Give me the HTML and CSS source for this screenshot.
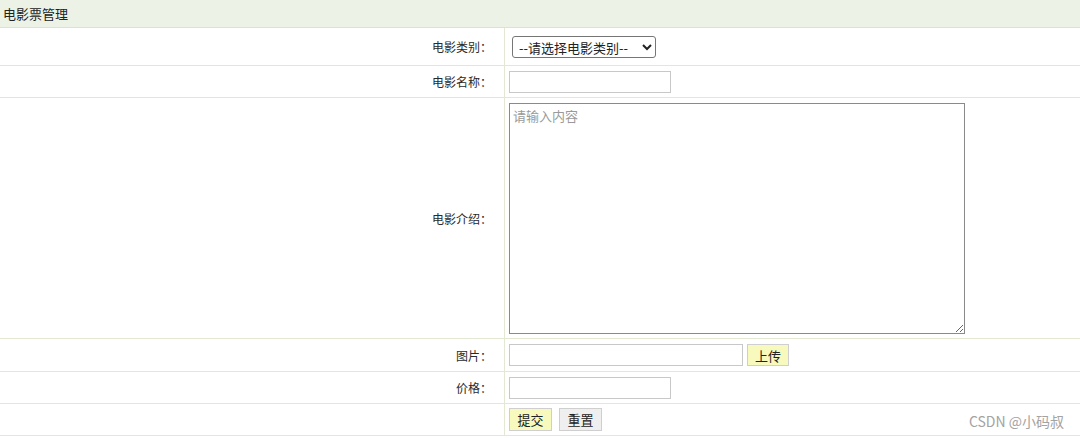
FILE: index.html
```html
<!DOCTYPE html>
<html lang="zh">
<head>
<meta charset="utf-8">
<link rel="stylesheet" href="styles.css">
</head>
<body>
<div class="panel">
  <div class="title">电影票管理</div>
  <form class="form">
    <div class="row r-cat">
      <div class="label">电影类别：</div>
      <div class="field">
        <select class="select"><option>--请选择电影类别--</option></select>
      </div>
    </div>
    <div class="row r-std">
      <div class="label">电影名称：</div>
      <div class="field"><input class="text short" type="text"></div>
    </div>
    <div class="row r-intro">
      <div class="label">电影介绍：</div>
      <div class="field"><textarea class="area" placeholder="请输入内容"></textarea></div>
    </div>
    <div class="row r-img">
      <div class="label">图片：</div>
      <div class="field">
        <input class="text long" type="text">
        <button type="button" class="btn yellow">上传</button>
      </div>
    </div>
    <div class="row r-std">
      <div class="label">价格：</div>
      <div class="field"><input class="text short" type="text"></div>
    </div>
    <div class="row r-btn">
      <div class="label"></div>
      <div class="field">
        <button type="button" class="btn yellow">提交</button>
        <button type="button" class="btn grey">重置</button>
        <span class="mark">CSDN @小码叔</span>
      </div>
    </div>
  </form>
</div>
</body>
</html>
```
FILE: styles.css
```css
html, body {
  margin: 0;
  padding: 0;
  background: #ffffff;
}
body {
  font-family: "Microsoft YaHei", "Noto Sans CJK SC", "Liberation Sans", sans-serif;
  font-size: 13px;
  color: #333333;
}
.panel {
  width: 1080px;
}
.title {
  height: 27px;
  line-height: 27px;
  padding-left: 3px;
  background: #edf2e6;
  border-bottom: 1px solid #dce3c6;
  color: #222;
}
.form {
  margin: 0;
}
.row {
  display: grid;
  grid-template-columns: 505px 1fr;
  border-bottom: 1px solid #e3e8d2;
}
.label {
  border-right: 1px solid #e3e8d2;
  font-size: 12px;
  padding-right: 12px;
  display: flex;
  align-items: center;
  justify-content: flex-end;
  color: #2a2a2a;
}
.field {
  display: flex;
  align-items: center;
  padding-left: 4px;
  position: relative;
}
.r-cat { height: 37px; }
.r-std { height: 31px; }
.r-intro { height: 240px; }
.r-img { height: 32px; }
.r-btn { height: 31px; }

.select {
  margin-left: 3px;
  width: 144px;
  height: 22px;
  font-family: inherit;
  font-size: 13px;
  color: #222;
  border: 1px solid #767676;
  border-radius: 3px;
  background: #fff;
  padding: 0 2px;
}
.text {
  box-sizing: border-box;
  height: 22px;
  border: 1px solid #c8c8c8;
  padding: 0 3px;
  font-family: inherit;
  font-size: 13px;
  margin: 0;
}
.short { width: 162px; }
.long { width: 234px; }
.area {
  box-sizing: border-box;
  width: 456px;
  height: 231px;
  margin: 5px 0 4px;
  align-self: flex-start;
  border: 1px solid #8a8a8a;
  padding: 2px 3px;
  font-family: inherit;
  font-size: 13px;
  color: #333;
  resize: both;
}
.area::placeholder { color: #9a9a9a; }
.btn {
  box-sizing: border-box;
  height: 22px;
  padding: 0 6px;
  font-family: inherit;
  font-size: 13px;
  color: #222;
  border: 1px solid #cfcfcf;
  margin: 0;
  cursor: pointer;
}
.yellow { background: #f7f9bd; }
.grey { background: #efefef; }
.r-img .btn { margin-left: 4px; width: 42px; }
.r-btn .btn { width: 43px; height: 23px; }
.r-btn .grey { margin-left: 7px; }
.mark {
  position: absolute;
  right: 16px;
  top: 7px;
  font-size: 14px;
  color: #a3a3a3;
}
```
